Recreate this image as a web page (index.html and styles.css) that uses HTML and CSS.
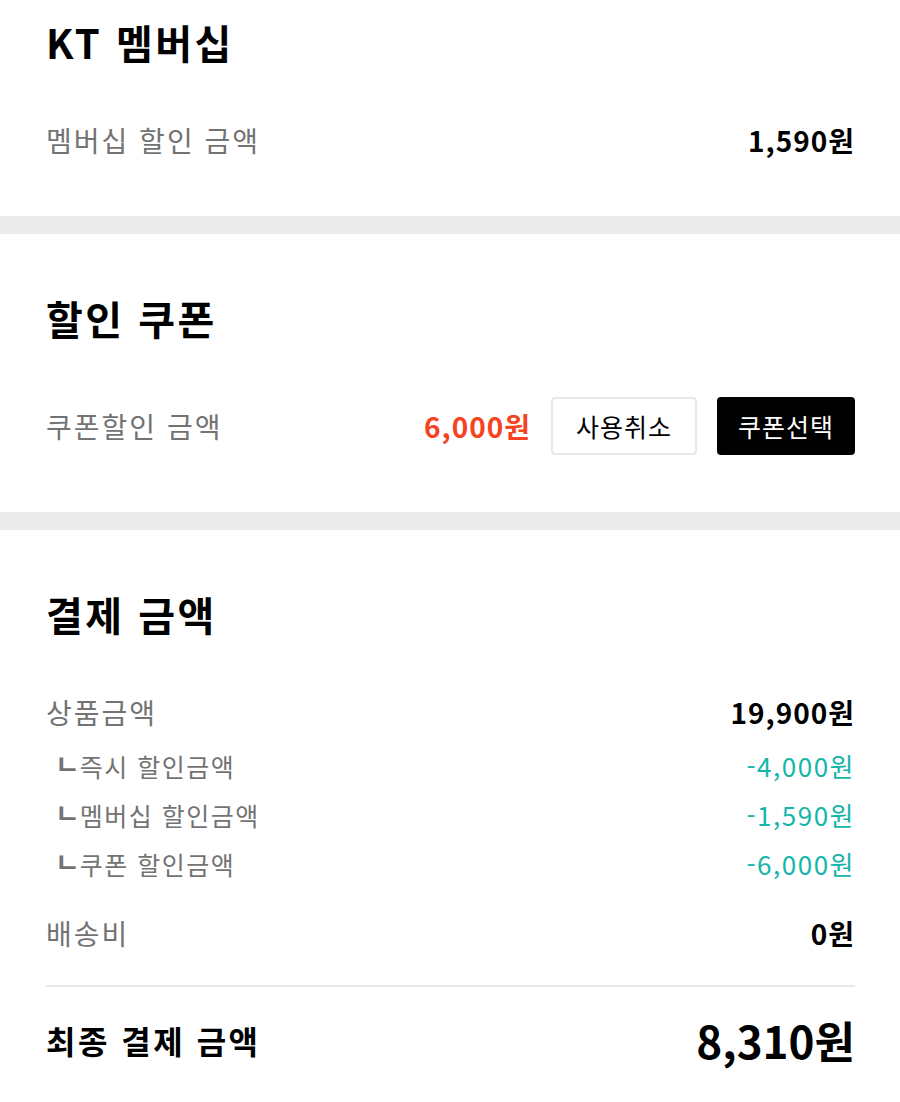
FILE: index.html
```html
<!DOCTYPE html>
<html lang="ko">

<head>
    <meta charset="UTF-8">
    <meta name="viewport" content="width=device-width, initial-scale=1.0">
    <title>결제</title>

    <link rel="stylesheet" href="styles.css">
</head>

<body>

    <section class="section section-top">
        <h2 class="section-title">KT 멤버십</h2>
        <div class="row">
            <span class="label">멤버십 할인 금액</span>
            <span class="value">1,590원</span>
        </div>
    </section>

    <section class="section">
        <h2 class="section-title">할인 쿠폰</h2>
        <div class="row">
            <span class="label">쿠폰할인 금액</span>
            <div class="coupon-actions">
                <span class="value value-red">6,000원</span>
                <button type="button" class="btn btn-cancel">사용취소</button>
                <button type="button" class="btn btn-select">쿠폰선택</button>
            </div>
        </div>
    </section>

    <section class="section">
        <h2 class="section-title">결제 금액</h2>
        <div class="row">
            <span class="label">상품금액</span>
            <span class="value">19,900원</span>
        </div>
        <div class="sub-list">
            <div class="row sub-row">
                <span class="label"><span class="corner">ㄴ</span>즉시 할인금액</span>
                <span class="sub-value">-4,000원</span>
            </div>
            <div class="row sub-row">
                <span class="label"><span class="corner">ㄴ</span>멤버십 할인금액</span>
                <span class="sub-value">-1,590원</span>
            </div>
            <div class="row sub-row">
                <span class="label"><span class="corner">ㄴ</span>쿠폰 할인금액</span>
                <span class="sub-value">-6,000원</span>
            </div>
        </div>
        <div class="row delivery-row">
            <span class="label">배송비</span>
            <span class="value">0원</span>
        </div>
        <div class="total-row">
            <span class="total-label">최종 결제 금액</span>
            <span class="total-value">8,310원</span>
        </div>
    </section>

</body>

</html>
```

FILE: styles.css
```css
body {
    margin: 0;
    background-color: #fff;
    font-family: "Noto Sans CJK KR", "Noto Sans", sans-serif;
    color: #000;
}

.section {
    background-color: #fff;
    padding: 60px 45px 57px 46px;
}

.section + .section {
    border-top: 18px solid #ebebeb;
}

/* 화면 위쪽이 잘려 있어서 첫 섹션은 여백을 줄임 */
.section-top {
    padding-top: 18px;
}

.section-title {
    margin: 0 0 55px;
    font-size: 40px;
    line-height: 48px;
    font-weight: 700;
    letter-spacing: 2.5px;
}

.row {
    display: flex;
    justify-content: space-between;
    align-items: center;
    min-height: 38px;
}

.label {
    color: #737373;
    font-size: 28px;
    line-height: 38px;
    letter-spacing: 2px;
}

.value {
    font-size: 28px;
    line-height: 38px;
    font-weight: 700;
    letter-spacing: 1px;
}

.value-red {
    color: #f5431f;
}

.coupon-actions {
    display: flex;
    align-items: center;
    gap: 20px;
}

.btn {
    height: 58px;
    font-family: inherit;
    font-size: 25px;
    letter-spacing: 1px;
    border-radius: 4px;
    cursor: pointer;
}

.btn-cancel {
    background-color: #fff;
    color: #000;
    border: 2px solid #e8e8e8;
    padding: 0 23px;
}

.btn-select {
    background-color: #000;
    color: #fff;
    border: none;
    padding: 0 21px;
}

.sub-list {
    display: flex;
    flex-direction: column;
    gap: 13px;
    margin-top: 17px;
}

.sub-row {
    min-height: 0;
    height: 36px;
}

.sub-row .label {
    font-size: 25px;
    line-height: 36px;
    padding-left: 9px;
    letter-spacing: 1.5px;
}

.corner {
    font-weight: 700;
    font-size: 27px;
    line-height: 0;
    letter-spacing: 0;
    vertical-align: 2px;
}

.sub-value {
    color: #16b5ab;
    font-size: 26px;
    line-height: 36px;
    letter-spacing: 1.5px;
}

.delivery-row {
    margin-top: 32px;
}

.total-row {
    display: flex;
    justify-content: space-between;
    align-items: center;
    margin-top: 33px;
    padding-top: 27px;
    border-top: 2px solid #e8e8e8;
}

.total-label {
    font-size: 32px;
    line-height: 52px;
    font-weight: 700;
    letter-spacing: 2.5px;
}

.total-value {
    font-size: 44px;
    line-height: 52px;
    font-weight: 700;
}
```
